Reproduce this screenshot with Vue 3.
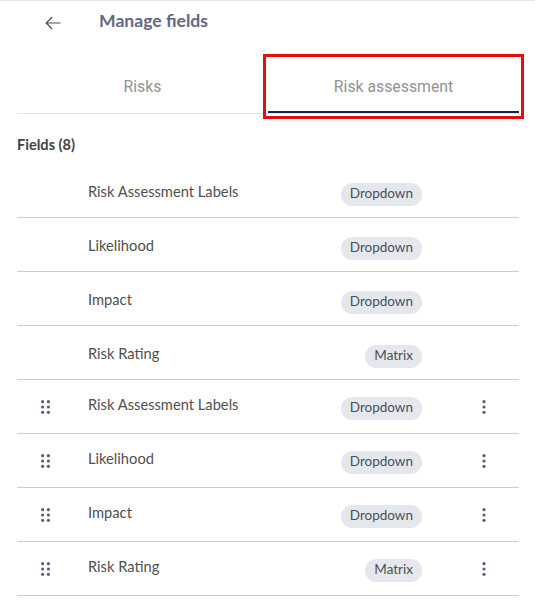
<script setup>
const base = [
  { name: 'Risk Assessment Labels', type: 'Dropdown' },
  { name: 'Likelihood', type: 'Dropdown' },
  { name: 'Impact', type: 'Dropdown' },
  { name: 'Risk Rating', type: 'Matrix' },
]
const rows = [
  ...base.map((r) => ({ ...r, custom: false })),
  ...base.map((r) => ({ ...r, custom: true })),
]
const dots = [[1.6, 1.7], [7.4, 1.7], [1.6, 7], [7.4, 7], [1.6, 12.3], [7.4, 12.3]]
</script>

<template>
  <div class="page">
    <header class="head">
      <svg class="back" width="16" height="14" viewBox="0 0 16 14" fill="none" stroke="#4a4f5c" stroke-width="1.2">
        <path d="M15.5 7H1.2M7.2 1 1.2 7l6 6" />
      </svg>
      <h1>Manage fields</h1>
    </header>
    <nav class="tabs">
      <div class="tab">Risks</div>
      <div class="tab active">Risk assessment</div>
      <div class="mark"></div>
    </nav>
    <h2>Fields (8)</h2>
    <ul>
      <li v-for="(row, i) in rows" :key="i" :class="{ custom: row.custom }">
        <span class="grip">
          <svg v-if="row.custom" width="9" height="14" viewBox="0 0 9 14" fill="#5a5d78">
            <circle v-for="(d, k) in dots" :key="k" :cx="d[0]" :cy="d[1]" r="1.6" />
          </svg>
        </span>
        <span class="name">{{ row.name }}</span>
        <span class="chipcell"><span class="chip">{{ row.type }}</span></span>
        <span class="more">
          <svg v-if="row.custom" width="4" height="14" viewBox="0 0 4 14" fill="#5a5d78">
            <circle cx="2" cy="1.7" r="1.6" /><circle cx="2" cy="7" r="1.6" /><circle cx="2" cy="12.3" r="1.6" />
          </svg>
        </span>
      </li>
    </ul>
  </div>
</template>

<style scoped>
.page {
  width: 535px;
  height: 613px;
  box-sizing: border-box;
  border-top: 1px solid #e6e6f5;
  padding: 0 16px 0 17px;
  background: #fff;
  font-family: Lato, sans-serif;
  overflow: hidden;
}
.head {
  display: flex;
  align-items: center;
  height: 38px;
  padding-left: 28px;
}
.back { flex: none; margin-top: 6px; }
h1 {
  margin: 0 0 0 38px;
  font-size: 17.6px;
  font-weight: 700;
  color: #626785;
}
.tabs {
  position: relative;
  display: flex;
  height: 75px;
  box-sizing: border-box;
  border-bottom: 1px solid #e3e3e3;
}
.tab {
  flex: 1;
  display: flex;
  align-items: center;
  justify-content: center;
  padding-top: 20px;
  box-sizing: border-box;
  font-family: Roboto, sans-serif;
  font-size: 15.8px;
  color: #929292;
}
.tab:first-child { flex: 0 0 251px; }
.tab.active { box-shadow: inset 0 -2px 0 #10264a; }
.mark {
  position: absolute;
  left: 246px;
  top: 15px;
  width: 255px;
  height: 59px;
  border: 3px solid #e60c0c;
  pointer-events: none;
}
h2 {
  margin: 22px 0 0;
  height: 28px;
  font-size: 14.6px;
  line-height: 17px;
  font-weight: 700;
  color: #444;
}
ul { margin: 0; padding: 0; list-style: none; }
li {
  display: flex;
  align-items: flex-start;
  height: 54px;
  box-sizing: border-box;
  border-bottom: 1px solid #cdcdcd;
  color: #505050;
}
.grip {
  flex: 0 0 71px;
  display: flex;
  padding: 20px 0 0 24px;
  box-sizing: border-box;
}
.name { flex: 0 0 252px; padding-top: 19px; font-size: 14.7px; line-height: 17px; }
.custom .name { padding-top: 16px; }
.chipcell {
  flex: 0 0 82px;
  display: flex;
  justify-content: flex-end;
  padding-top: 19px;
}
.custom .chipcell { padding-top: 17px; }
.chip {
  height: 23px;
  line-height: 21px;
  padding: 0 9px;
  border-radius: 12px;
  background: #e4e8ec;
  font-size: 13.5px;
  color: #4a4f57;
}
.more {
  flex: 1;
  display: flex;
  padding: 20px 0 0 60px;
  box-sizing: border-box;
}
</style>
